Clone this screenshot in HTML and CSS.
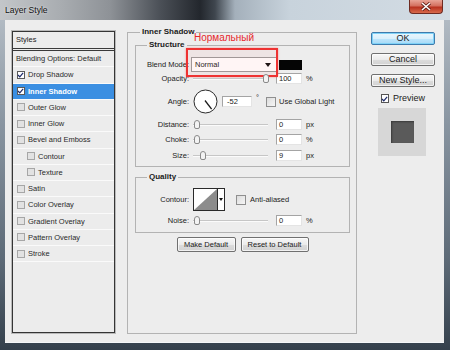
FILE: index.html
```html
<!DOCTYPE html>
<html lang="en">
<head>
    <meta charset="UTF-8">
    <title>Layer Style</title>
    <link rel="stylesheet" href="styles.css">
</head>
<body>
    <div class="titlebar">
        <span class="title">Layer Style</span>
        <span class="close">
            <svg width="12" height="9" viewBox="0 0 12 9"><path d="M2 1 L10 8 M10 1 L2 8" stroke="#5a1a12" stroke-width="3"/><path d="M2 1 L10 8 M10 1 L2 8" stroke="#fff" stroke-width="1.6"/></svg>
        </span>
    </div>

    <div class="client">
        <div class="styles-list">
            <div class="list-head">Styles</div>
            <div class="list-row plain">Blending Options: Default</div>
            <div class="list-row"><span class="cb on"><svg width="8" height="8" viewBox="0 0 8 8"><path d="M1.2 4 L3.2 6.2 L7 1.5" fill="none" stroke="#1d2a6a" stroke-width="1.4"/></svg></span>Drop Shadow</div>
            <div class="list-row selected"><span class="cb on"><svg width="8" height="8" viewBox="0 0 8 8"><path d="M1.2 4 L3.2 6.2 L7 1.5" fill="none" stroke="#1d2a6a" stroke-width="1.4"/></svg></span>Inner Shadow</div>
            <div class="list-row"><span class="cb"></span>Outer Glow</div>
            <div class="list-row"><span class="cb"></span>Inner Glow</div>
            <div class="list-row"><span class="cb"></span>Bevel and Emboss</div>
            <div class="list-row sub"><span class="cb"></span>Contour</div>
            <div class="list-row sub"><span class="cb"></span>Texture</div>
            <div class="list-row"><span class="cb"></span>Satin</div>
            <div class="list-row"><span class="cb"></span>Color Overlay</div>
            <div class="list-row"><span class="cb"></span>Gradient Overlay</div>
            <div class="list-row"><span class="cb"></span>Pattern Overlay</div>
            <div class="list-row"><span class="cb"></span>Stroke</div>
        </div>

        <fieldset class="group main">
            <legend class="main-legend">Inner Shadow</legend>

            <fieldset class="group structure">
                <legend>Structure</legend>
                <div class="row blend">
                    <span class="lbl">Blend Mode:</span>
                    <div class="select"><span>Normal</span><span class="arrow"></span></div>
                    <span class="swatch"></span>
                    <div class="mark"><span class="mark-text">Нормальный</span></div>
                </div>
                <div class="row small r-opacity">
                    <span class="lbl">Opacity:</span>
                    <div class="slider"><span class="thumb" style="left: 70px"></span></div>
                    <span class="num">100</span>
                    <span class="unit">%</span>
                </div>
                <div class="row angle">
                    <span class="lbl">Angle:</span>
                    <svg class="dial" width="25" height="25" viewBox="0 0 25 25">
                        <circle cx="12.5" cy="12.5" r="11.5" fill="#fff" stroke="#2b2b2b" stroke-width="1"/>
                        <line x1="12" y1="11.5" x2="18.6" y2="20.2" stroke="#1a1a1a" stroke-width="1.3"/>
                    </svg>
                    <span class="num wide">-52</span>
                    <span class="unit deg">°</span>
                    <span class="check"></span>
                    <span class="check-text">Use Global Light</span>
                </div>
                <div class="row small r-distance">
                    <span class="lbl">Distance:</span>
                    <div class="slider"><span class="thumb" style="left: 1px"></span></div>
                    <span class="num">0</span>
                    <span class="unit">px</span>
                </div>
                <div class="row small r-choke">
                    <span class="lbl">Choke:</span>
                    <div class="slider"><span class="thumb" style="left: 1px"></span></div>
                    <span class="num">0</span>
                    <span class="unit">%</span>
                </div>
                <div class="row small r-size">
                    <span class="lbl">Size:</span>
                    <div class="slider"><span class="thumb" style="left: 7px"></span></div>
                    <span class="num">9</span>
                    <span class="unit">px</span>
                </div>
            </fieldset>

            <fieldset class="group quality">
                <legend>Quality</legend>
                <div class="row contour-row">
                    <span class="lbl">Contour:</span>
                    <div class="contour">
                        <svg width="23" height="21" viewBox="0 0 23 21"><rect width="23" height="21" fill="#fff"/><polygon points="0,21 23,0 23,21" fill="#8c8c8c"/></svg>
                        <span class="contour-drop"><span class="arrow"></span></span>
                    </div>
                    <span class="check anti"></span>
                    <span class="check-text">Anti-aliased</span>
                </div>
                <div class="row small r-noise">
                    <span class="lbl">Noise:</span>
                    <div class="slider"><span class="thumb" style="left: 1px"></span></div>
                    <span class="num">0</span>
                    <span class="unit">%</span>
                </div>
            </fieldset>

            <div class="btns">
                <button class="btn make">Make Default</button>
                <button class="btn reset">Reset to Default</button>
            </div>
        </fieldset>

        <div class="actions">
            <button class="abtn ok">OK</button>
            <button class="abtn">Cancel</button>
            <button class="abtn">New Style...</button>
            <div class="preview-check">
                <span class="pcb"><svg width="8" height="8" viewBox="0 0 8 8"><path d="M1.2 4 L3.2 6.2 L7 1.5" fill="none" stroke="#1d2a6a" stroke-width="1.4"/></svg></span>
                <span>Preview</span>
            </div>
            <div class="preview">
                <span class="preview-square"></span>
            </div>
        </div>
    </div>
</body>
</html>
```

FILE: styles.css
```css
* {
    box-sizing: border-box;
}
body {
    margin: 0;
    width: 450px;
    height: 350px;
    overflow: hidden;
    font-family: "Liberation Sans", Arial, sans-serif;
    font-size: 7.5px;
    color: #222222;
    background: linear-gradient(180deg, #b9c1c9 0, #8a96a2 120px, #5d6a77 260px, #34404c 350px);
}
.titlebar {
    height: 20px;
    display: flex;
    align-items: center;
    padding-left: 5px;
    background: linear-gradient(90deg, #c3c6c9 0, #a9adb1 60px, #8e9297 110px, #4b5057 160px, #23272d 200px, #3f464e 215px, #a4b0bb 235px, #c8d3dc 290px, #d3dce4 450px);
}
.title {
    font-size: 8.5px;
    color: #111111;
    text-shadow: 0 0 3px rgba(255,255,255,0.8);
}
.close {
    margin-left: auto;
    margin-right: 7px;
    align-self: flex-start;
    width: 34px;
    height: 14px;
    display: flex;
    align-items: center;
    justify-content: center;
    border: 1px solid #6e2b22;
    border-top: none;
    border-radius: 0 0 4px 4px;
    background: linear-gradient(180deg, #e8a496 0, #d4705f 45%, #b8321f 55%, #d86a4c 100%);
}
.client {
    margin-left: 5px;
    width: 439px;
    height: 322px;
    background: #ededed;
    display: flex;
    align-items: flex-start;
    box-shadow: 0 1px 0 #f4f6f8;
}

/* styles list */
.styles-list {
    margin: 11px 0 0 7px;
    width: 103px;
    height: 302px;
    border: 1px solid #353535;
    box-shadow: 0 0 0 1px #b9b9b9;
    background: #ececec;
}
.list-head {
    height: 19px;
    line-height: 16px;
    padding-left: 3px;
    border-bottom: 3px double #3a3a3a;
}
.list-row {
    height: 16.25px;
    display: flex;
    align-items: center;
    padding-left: 4px;
    border-bottom: 1px solid #fafafa;
    color: #2a2a2a;
}
.list-row.plain {
    padding-left: 3px;
}
.list-row.sub {
    padding-left: 14px;
}
.list-row.selected {
    background: #3b8fe2;
    color: #ffffff;
    font-weight: bold;
}
.cb {
    width: 8px;
    height: 8px;
    margin-right: 3px;
    border: 1px solid #a6a6a6;
    background: #e2e2e2;
    flex: none;
    display: flex;
}
.cb.on {
    border-color: #5a5a5a;
    background: #ffffff;
}
.cb svg {
    margin: -1px 0 0 -1px;
}

/* fieldsets */
.group {
    margin: 0;
    min-width: 0;
    border: 1px solid #b3b3b3;
}
.group legend {
    padding: 0 2px;
    margin-left: 11px;
    font-weight: bold;
    font-size: 8px;
    line-height: 10px;
    color: #1a1a1a;
}
.main {
    margin: 7px 0 0 12px;
    width: 230px;
    height: 307px;
    padding: 3px 6px 0 7px;
}
.main .main-legend {
    margin-left: 5px;
}
.structure {
    padding: 7px 0 5px 0;
}
.quality {
    margin-top: 5px;
    padding: 6px 0 6px 0;
}

/* rows */
.row {
    display: flex;
    align-items: center;
}
.row.small {
    height: 11px;
}
.lbl {
    width: 53px;
    margin-right: 4px;
    text-align: right;
    flex: none;
}
.blend {
    height: 15px;
    position: relative;
}
.r-opacity {
    margin-top: 1px;
}
.angle {
    height: 25px;
    margin-top: 5px;
}
.r-distance {
    margin-top: 5px;
}
.r-choke {
    margin-top: 4px;
}
.r-size {
    margin-top: 5px;
}
.select {
    width: 86px;
    height: 15px;
    margin-left: -2px;
    padding: 0 5px 0 3px;
    background: #ffffff;
    border: 1px solid #9c9c9c;
    display: flex;
    align-items: center;
    justify-content: space-between;
}
.arrow {
    width: 0;
    height: 0;
    border-left: 3.5px solid transparent;
    border-right: 3.5px solid transparent;
    border-top: 4px solid #111111;
}
.swatch {
    width: 23px;
    height: 10px;
    margin-left: 2px;
    background: #050505;
}
.mark {
    position: absolute;
    left: 50px;
    top: -9px;
    width: 92px;
    height: 29px;
    border: 2px solid #ee3232;
    background: rgba(255, 80, 80, 0.06);
    box-shadow: 0 0 2px rgba(255, 60, 60, 0.5);
}
.mark-text {
    position: absolute;
    left: 6px;
    top: -17px;
    font-size: 10px;
    line-height: 10px;
    color: #e6282c;
    white-space: nowrap;
}
.slider {
    position: relative;
    width: 75px;
    height: 11px;
    flex: none;
}
.slider::before {
    content: "";
    position: absolute;
    left: 0;
    right: 0;
    top: 5px;
    height: 1px;
    background: #c6c6c6;
    box-shadow: 0 1px 0 #fbfbfb;
}
.thumb {
    position: absolute;
    top: 1px;
    width: 6px;
    height: 9px;
    border: 1px solid #8a8a8a;
    border-radius: 3px 3px 2px 2px;
    background: #f3f3f3;
}
.num {
    width: 26px;
    height: 11px;
    margin-left: 8px;
    padding-left: 2px;
    line-height: 9px;
    background: #ffffff;
    border: 1px solid;
    border-color: #a4a4a4 #e4e4e4 #e4e4e4 #a4a4a4;
    flex: none;
}
.num.wide {
    width: 30px;
    margin-left: 4px;
    padding-left: 4px;
}
.unit {
    margin-left: 4px;
}
.unit.deg {
    align-self: flex-start;
    margin-top: 4px;
}
.dial {
    flex: none;
}
.check {
    width: 10px;
    height: 10px;
    margin-left: 7px;
    border: 1px solid #8f8f8f;
    background: linear-gradient(135deg, #dcdcdc, #f6f6f6);
    flex: none;
}
.check-text {
    margin-left: 3px;
}
.check.anti {
    margin-left: 11px;
}
.anti + .check-text {
    margin-left: 4px;
}

/* quality */
.contour-row {
    height: 23px;
}
.contour {
    display: flex;
    height: 23px;
    border: 1px solid #2a2a2a;
    background: #ffffff;
}
.contour svg {
    display: block;
}
.contour-drop {
    width: 7px;
    border-left: 1px solid #2a2a2a;
    display: flex;
    align-items: center;
    justify-content: center;
}
.contour-drop .arrow {
    border-left-width: 2.5px;
    border-right-width: 2.5px;
    border-top-width: 3px;
}
.r-noise {
    margin-top: 4px;
}

/* buttons */
.btns {
    display: flex;
    justify-content: center;
    gap: 5px;
    margin-top: 4px;
}
.btn, .abtn {
    font-family: "Liberation Sans", Arial, sans-serif;
    color: #1a1a1a;
    padding: 0;
    border: 1px solid #707070;
    border-radius: 2px;
    background: linear-gradient(180deg, #f7f7f7 0, #ebebeb 50%, #dcdcdc 51%, #d2d2d2 100%);
    box-shadow: inset 0 0 0 1px rgba(255,255,255,0.7);
}
.btn {
    height: 15px;
    font-size: 7.5px;
}
.btn.make {
    width: 59px;
}
.btn.reset {
    width: 68px;
}
.actions {
    margin: 12px 0 0 14px;
    width: 64px;
    display: flex;
    flex-direction: column;
}
.abtn {
    height: 13px;
    margin-bottom: 8px;
    font-size: 9px;
    line-height: 11px;
}
.abtn.ok {
    border-color: #3d7bad;
    background: linear-gradient(180deg, #eaf6fd 0, #d9f0fc 50%, #bee6fd 51%, #a7d9f5 100%);
    box-shadow: inset 0 0 0 1px #7fd2f7;
}
.preview-check {
    display: flex;
    align-items: center;
    height: 10px;
    margin: -2px 0 0 10px;
    font-size: 9px;
}
.pcb {
    width: 8px;
    height: 9px;
    margin-right: 4px;
    border: 1px solid #555555;
    background: #ffffff;
    display: flex;
}
.pcb svg {
    margin: 0 0 0 -1px;
}
.preview {
    width: 48px;
    height: 48px;
    margin: 5px 0 0 7px;
    background: #d7d7d7;
    display: flex;
    align-items: center;
    justify-content: center;
}
.preview-square {
    width: 23px;
    height: 22px;
    background: #5a5a5a;
    box-shadow: inset 1px 1px 2px #3a3a3a;
}
```
